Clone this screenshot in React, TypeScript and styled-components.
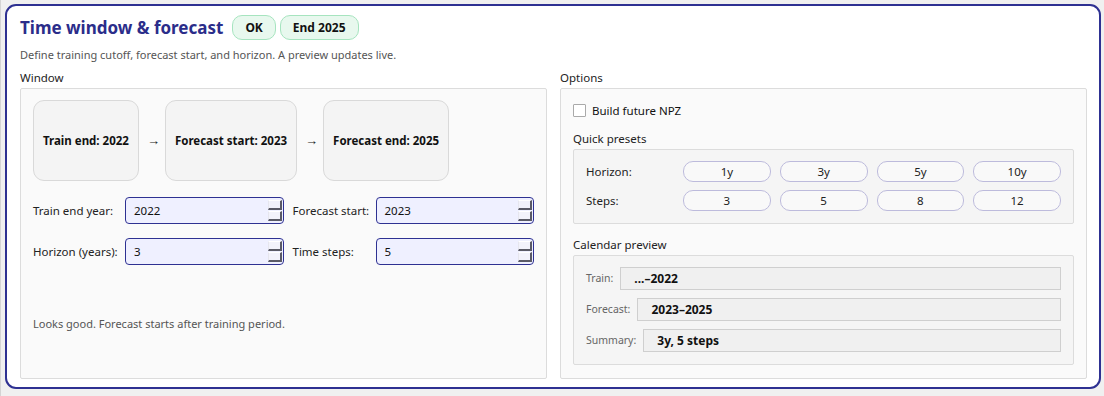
import styled, { createGlobalStyle } from 'styled-components'

const GlobalStyle = createGlobalStyle`
  html, body {
    margin: 0;
    padding: 0;
    background: #f0f0f0;
    font-family: 'Noto Sans', 'Open Sans', sans-serif;
    font-size: 11.5px;
    line-height: 15px;
    color: #1e1e1e;
  }
  * { box-sizing: border-box; }
`

const Page = styled.div`
  width: 1104px;
  height: 396px;
  padding: 4px 3px 7px 4px;
  border-left: 1px solid #d4d4d4;
`

const Card = styled.div`
  height: 100%;
  background: #ffffff;
  border: 2px solid #2e3192;
  border-radius: 11px;
  padding: 9px 12px 11px 13px;
  display: flex;
  flex-direction: column;
  overflow: hidden;
`

const HeaderRow = styled.div`
  display: flex;
  align-items: center;
  gap: 4px;
  height: 25px;
`

const Title = styled.h1`
  margin: 0 5px 0 0;
  font-size: 17px;
  line-height: 22px;
  font-weight: 700;
  color: #2b2d8a;
`

const Badge = styled.span`
  display: inline-flex;
  align-items: center;
  height: 25px;
  padding: 0 12px;
  border-radius: 10px;
  background: #e8f8ee;
  border: 1px solid #a6e4bf;
  font-weight: 700;
  font-size: 12px;
  color: #111;
`

const Subtitle = styled.p`
  margin: 7px 0 0;
  font-size: 11px;
  color: #555;
`

const Columns = styled.div`
  flex: 1;
  display: grid;
  grid-template-columns: 1fr 1fr;
  column-gap: 13px;
  margin-top: 8px;
`

const Column = styled.div`
  display: flex;
  flex-direction: column;
`

const SectionLabel = styled.div`
  color: #222;
  height: 17px;
  margin-bottom: 1px;
`

const GroupBox = styled.div`
  flex: 1;
  background: #fafafa;
  border: 1px solid #dcdcdc;
  border-radius: 2px;
  padding: 11px 12px 13px 12px;
  display: flex;
  flex-direction: column;
`

const Timeline = styled.div`
  display: flex;
  align-items: center;
  gap: 8px;
`

const StageCard = styled.div`
  height: 81px;
  padding: 0 9px;
  display: flex;
  align-items: center;
  background: #f4f4f4;
  border: 1px solid #d9d9d9;
  border-radius: 11px;
  font-weight: 700;
  color: #111;
  white-space: nowrap;
`

const Arrow = styled.span`
  color: #222;
  font-size: 13px;
  width: 10px;
  text-align: center;
`

const FormGrid = styled.div`
  display: grid;
  grid-template-columns: 83px 1fr 74px 1fr;
  column-gap: 9px;
  row-gap: 14px;
  margin-top: 16px;
  align-items: center;
`

const FieldLabel = styled.label`
  color: #222;
  white-space: nowrap;
`

const SpinBox = styled.div`
  height: 27px;
  display: flex;
  align-items: center;
  background: #eff0ff;
  border: 1px solid #2e3192;
  border-radius: 4px;
  padding: 0 1px 0 8px;
`

const SpinValue = styled.span`
  flex: 1;
  color: #111;
`

const SpinButtons = styled.div`
  display: flex;
  flex-direction: column;
  gap: 1px;
  width: 14px;
`

const SpinButton = styled.div`
  height: 10px;
  background: #f2f2fb;
  border-top: 1px solid #ffffff;
  border-left: 1px solid #e6e6ee;
  border-right: 2px solid #5a5a66;
  border-bottom: 2px solid #5a5a66;
`

const StatusText = styled.p`
  margin: 51px 0 0;
  font-size: 11px;
  color: #555;
`

const CheckRow = styled.label`
  display: flex;
  align-items: center;
  gap: 6px;
  margin-top: 3px;
  color: #111;
`

const CheckBox = styled.span`
  width: 13px;
  height: 13px;
  border: 1px solid #a9a9a9;
  background: #fff;
  border-radius: 1px;
`

const SubLabel = styled.div`
  color: #222;
  margin-top: 13px;
  margin-bottom: 3px;
`

const InnerBox = styled.div`
  background: #f5f5f5;
  border: 1px solid #dcdcdc;
  border-radius: 2px;
  padding: 11px 12px 12px 12px;
  display: flex;
  flex-direction: column;
  gap: 8px;
`

const PresetRow = styled.div`
  display: grid;
  grid-template-columns: 88px repeat(4, 1fr);
  column-gap: 9px;
  align-items: center;
`

const PresetButton = styled.button`
  height: 21px;
  border: 1px solid #bdbbdc;
  border-radius: 10px;
  background: #f9f9f9;
  font-family: inherit;
  font-size: 11.5px;
  color: #222;
  padding: 0;
`

const PreviewRow = styled.div`
  display: flex;
  align-items: center;
  gap: 7px;
`

const PreviewLabel = styled.span`
  font-size: 10.5px;
  color: #666;
  white-space: nowrap;
`

const PreviewValue = styled.div`
  flex: 1;
  height: 23px;
  display: flex;
  align-items: center;
  padding-left: 13px;
  background: #f0f0f0;
  border: 1px solid #cfcfcf;
  font-weight: 700;
  font-size: 12px;
  color: #111;
`

const Spin = ({ value }: { value: string }) => (
  <SpinBox>
    <SpinValue>{value}</SpinValue>
    <SpinButtons>
      <SpinButton />
      <SpinButton />
    </SpinButtons>
  </SpinBox>
)

const presets = [
  { label: 'Horizon:', items: ['1y', '3y', '5y', '10y'] },
  { label: 'Steps:', items: ['3', '5', '8', '12'] },
]

const preview = [
  { label: 'Train:', value: '...–2022' },
  { label: 'Forecast:', value: '2023–2025' },
  { label: 'Summary:', value: '3y, 5 steps' },
]

const App = (): JSX.Element => {
  return (
    <Page>
      <GlobalStyle />
      <Card>
        <HeaderRow>
          <Title>Time window &amp; forecast</Title>
          <Badge>OK</Badge>
          <Badge>End 2025</Badge>
        </HeaderRow>
        <Subtitle>Define training cutoff, forecast start, and horizon. A preview updates live.</Subtitle>
        <Columns>
          <Column>
            <SectionLabel>Window</SectionLabel>
            <GroupBox>
              <Timeline>
                <StageCard>Train end: 2022</StageCard>
                <Arrow>→</Arrow>
                <StageCard>Forecast start: 2023</StageCard>
                <Arrow>→</Arrow>
                <StageCard>Forecast end: 2025</StageCard>
              </Timeline>
              <FormGrid>
                <FieldLabel>Train end year:</FieldLabel>
                <Spin value="2022" />
                <FieldLabel>Forecast start:</FieldLabel>
                <Spin value="2023" />
                <FieldLabel>Horizon (years):</FieldLabel>
                <Spin value="3" />
                <FieldLabel>Time steps:</FieldLabel>
                <Spin value="5" />
              </FormGrid>
              <StatusText>Looks good. Forecast starts after training period.</StatusText>
            </GroupBox>
          </Column>
          <Column>
            <SectionLabel>Options</SectionLabel>
            <GroupBox>
              <CheckRow>
                <CheckBox />
                Build future NPZ
              </CheckRow>
              <SubLabel>Quick presets</SubLabel>
              <InnerBox>
                {presets.map(({ label, items }) => (
                  <PresetRow key={label}>
                    <FieldLabel>{label}</FieldLabel>
                    {items.map(item => (
                      <PresetButton key={item}>{item}</PresetButton>
                    ))}
                  </PresetRow>
                ))}
              </InnerBox>
              <SubLabel>Calendar preview</SubLabel>
              <InnerBox>
                {preview.map(({ label, value }) => (
                  <PreviewRow key={label}>
                    <PreviewLabel>{label}</PreviewLabel>
                    <PreviewValue>{value}</PreviewValue>
                  </PreviewRow>
                ))}
              </InnerBox>
            </GroupBox>
          </Column>
        </Columns>
      </Card>
    </Page>
  )
}

export default App
